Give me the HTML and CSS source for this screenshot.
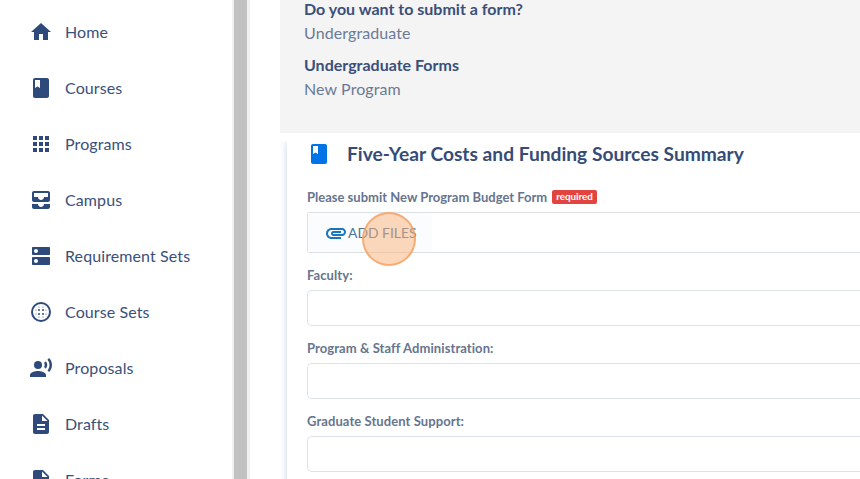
FILE: index.html
```html
<!DOCTYPE html>
<html lang="en">
<head>
    <meta charset="UTF-8">
    <meta name="viewport" content="width=device-width, initial-scale=1.0">
    <title>New Program</title>
    <link rel="stylesheet" href="styles.css">
</head>
<body>
    <div class="app">
        <nav class="sidebar">
            <ul>
                <li>
                    <svg class="icon" viewBox="0 0 24 24"><path d="M10 20v-6h4v6h5v-8h3L12 3 2 12h3v8z"/></svg>
                    <span>Home</span>
                </li>
                <li>
                    <svg class="icon" viewBox="0 0 24 24"><path d="M18 2H6c-1.1 0-2 .9-2 2v16c0 1.1.9 2 2 2h12c1.1 0 2-.9 2-2V4c0-1.1-.9-2-2-2zM6 4h5v8l-2.5-1.5L6 12V4z"/></svg>
                    <span>Courses</span>
                </li>
                <li>
                    <svg class="icon" viewBox="0 0 24 24"><path d="M4 8h4V4H4v4zm6 12h4v-4h-4v4zm-6 0h4v-4H4v4zm0-6h4v-4H4v4zm6 0h4v-4h-4v4zm6-10v4h4V4h-4zm-6 4h4V4h-4v4zm6 6h4v-4h-4v4zm0 6h4v-4h-4v4z"/></svg>
                    <span>Programs</span>
                </li>
                <li>
                    <svg class="icon" viewBox="0 0 24 24"><path d="M19 3H5c-1.1 0-2 .9-2 2v7c0 1.1.9 2 2 2h14c1.1 0 2-.9 2-2V5c0-1.1-.9-2-2-2zm0 6h-4c0 1.62-1.38 3-3 3s-3-1.38-3-3H5V5h14v4zm-4 7h6v3c0 1.1-.9 2-2 2H5c-1.1 0-2-.9-2-2v-3h6c0 1.66 1.34 3 3 3s3-1.34 3-3z"/></svg>
                    <span>Campus</span>
                </li>
                <li>
                    <svg class="icon" viewBox="0 0 24 24"><path d="M20 13H4c-.55 0-1 .45-1 1v6c0 .55.45 1 1 1h16c.55 0 1-.45 1-1v-6c0-.55-.45-1-1-1zM7 19c-1.1 0-2-.9-2-2s.9-2 2-2 2 .9 2 2-.9 2-2 2zM20 3H4c-.55 0-1 .45-1 1v6c0 .55.45 1 1 1h16c.55 0 1-.45 1-1V4c0-.55-.45-1-1-1zM7 9c-1.1 0-2-.9-2-2s.9-2 2-2 2 .9 2 2-.9 2-2 2z"/></svg>
                    <span>Requirement Sets</span>
                </li>
                <li>
                    <svg class="icon" viewBox="0 0 24 24">
                        <circle class="ring" cx="12" cy="12" r="9"/>
                        <circle cx="10" cy="10" r="1"/><circle cx="14" cy="10" r="1"/>
                        <circle cx="10" cy="14" r="1"/><circle cx="14" cy="14" r="1"/>
                        <circle cx="10" cy="7" r=".5"/><circle cx="14" cy="7" r=".5"/>
                        <circle cx="10" cy="17" r=".5"/><circle cx="14" cy="17" r=".5"/>
                        <circle cx="7" cy="10" r=".5"/><circle cx="7" cy="14" r=".5"/>
                        <circle cx="17" cy="10" r=".5"/><circle cx="17" cy="14" r=".5"/>
                    </svg>
                    <span>Course Sets</span>
                </li>
                <li>
                    <svg class="icon" viewBox="0 0 24 24"><circle cx="9" cy="9" r="4"/><path d="M9 15c-2.67 0-8 1.34-8 4v2h16v-2c0-2.66-5.33-4-8-4zm7.76-9.64l-1.68 1.69c.84 1.18.84 2.71 0 3.89l1.68 1.69c2.02-2.02 2.02-5.07 0-7.27zM20.07 2l-1.63 1.63c2.77 3.02 2.77 7.56 0 10.74L20.07 16c3.9-3.89 3.91-9.95 0-14z"/></svg>
                    <span>Proposals</span>
                </li>
                <li>
                    <svg class="icon" viewBox="0 0 24 24"><path d="M14 2H6c-1.1 0-1.99.9-1.99 2L4 20c0 1.1.89 2 1.99 2H18c1.1 0 2-.9 2-2V8l-6-6zm2 16H8v-2h8v2zm0-4H8v-2h8v2zm-3-5V3.5L18.5 9H13z"/></svg>
                    <span>Drafts</span>
                </li>
                <li>
                    <svg class="icon" viewBox="0 0 24 24"><path d="M14 2H6c-1.1 0-1.99.9-1.99 2L4 20c0 1.1.89 2 1.99 2H18c1.1 0 2-.9 2-2V8l-6-6zm2 16H8v-2h8v2zm0-4H8v-2h8v2zm-3-5V3.5L18.5 9H13z"/></svg>
                    <span>Forms</span>
                </li>
            </ul>
        </nav>
        <div class="scrollbar"><div class="thumb"></div></div>

        <main class="content">
            <dl class="summary">
                <dt>Do you want to submit a form?</dt>
                <dd>Undergraduate</dd>
                <dt>Undergraduate Forms</dt>
                <dd>New Program</dd>
            </dl>

            <div class="card-wrap">
                <section class="card">
                    <div class="card-title">
                        <svg class="icon" viewBox="0 0 24 24"><path d="M18 2H6c-1.1 0-2 .9-2 2v16c0 1.1.9 2 2 2h12c1.1 0 2-.9 2-2V4c0-1.1-.9-2-2-2zM6 4h5v8l-2.5-1.5L6 12V4z"/></svg>
                        <h2>Five-Year Costs and Funding Sources Summary</h2>
                    </div>
                    <div class="field">
                        <div class="label">Please submit New Program Budget Form <span class="required">required</span></div>
                        <div class="upload">
                            <button class="add-files">
                                <svg class="icon" viewBox="0 0 24 24"><path d="M2 12.5C2 9.46 4.46 7 7.5 7H18c2.21 0 4 1.79 4 4s-1.79 4-4 4H9.5C8.12 15 7 13.88 7 12.5S8.12 10 9.5 10H17v2H9.41c-.55 0-.55 1 0 1H18c1.1 0 2-.9 2-2s-.9-2-2-2H7.5C5.57 9 4 10.57 4 12.5S5.57 16 7.5 16H17v2H7.5C4.46 18 2 15.54 2 12.5z"/></svg>
                                <span>ADD FILES</span>
                            </button>
                            <div class="click-marker"></div>
                        </div>
                    </div>
                    <div class="field">
                        <label class="label" for="faculty">Faculty:</label>
                        <input id="faculty" type="text">
                    </div>
                    <div class="field">
                        <label class="label" for="staff">Program &amp; Staff Administration:</label>
                        <input id="staff" type="text">
                    </div>
                    <div class="field">
                        <label class="label" for="support">Graduate Student Support:</label>
                        <input id="support" type="text">
                    </div>
                </section>
            </div>
        </main>
    </div>
</body>
</html>
```
FILE: styles.css
```css
*{
    box-sizing: border-box;
    margin: 0;
    padding: 0;
}
body{
    font-family: Lato, sans-serif;
    font-size: 16px;
    color: #2e4a7b;
    background: #fff;
    overflow: hidden;
}
ul{
    list-style: none;
}
.icon{
    flex: none;
    width: 24px;
    height: 24px;
    fill: currentColor;
}
.app{
    display: flex;
    height: 479px;
    overflow: hidden;
}

/* sidebar */
.sidebar{
    flex: none;
    width: 232px;
    padding-top: 4px;
}
.sidebar li{
    display: flex;
    align-items: center;
    gap: 12px;
    height: 56px;
    padding-left: 29px;
}
.sidebar span{
    padding-bottom: 2px;
    letter-spacing: .1px;
    color: #3a5079;
}
.sidebar .ring{
    fill: none;
    stroke: currentColor;
    stroke-width: 2;
}
.scrollbar{
    flex: none;
    width: 18px;
    padding: 0 3px 0 2px;
    background: #eff1f1;
}
.scrollbar .thumb{
    height: 100%;
    background: #c1c1c1;
}

/* content */
.content{
    flex: 1;
    margin-left: 30px;
}
.summary{
    display: flow-root;
    height: 133px;
    padding-left: 24px;
    background: #f4f4f4;
    line-height: 24px;
}
.summary dt{
    margin-top: -3px;
    font-weight: bold;
    color: #3a4f79;
}
.summary dd{
    color: #6b7a96;
    margin-bottom: 11px;
    letter-spacing: .1px;
}
.card-wrap{
    margin-top: 8px;
    padding-left: 7px;
    overflow: hidden;
}
.card{
    height: 400px;
    padding-left: 20px;
    box-shadow: 0 0 8px #c9d6e8;
}
.card-title{
    display: flex;
    align-items: center;
    gap: 16px;
    height: 26px;
    color: #0073e6;
}
.card-title h2{
    font-size: 19.2px;
    line-height: 26px;
    color: #364c77;
}
.field{
    margin-bottom: 12px;
}
.label{
    display: flex;
    align-items: center;
    gap: 5px;
    height: 25px;
    padding-bottom: 6px;
    font-size: 13px;
    font-weight: bold;
    letter-spacing: .08px;
    color: #66758f;
}
.card-title + .field .label{
    height: 45px;
    padding: 15px 0 0;
    letter-spacing: 0;
}
.required{
    height: 14px;
    padding: 0 4px;
    border-radius: 2px;
    background: #e2453f;
    color: #fff;
    font-size: 9.8px;
    line-height: 13px;
}
.field input{
    display: block;
    width: 100%;
    height: 36px;
    border: 1px solid #dde2e9;
    border-right: 0;
    border-radius: 5px 0 0 5px;
}
.upload{
    position: relative;
    height: 41px;
    border: 1px solid #dcdfe3;
    border-right: 0;
    border-radius: 3px 0 0 3px;
}
.add-files{
    display: flex;
    align-items: center;
    width: 124px;
    height: 39px;
    padding-left: 16px;
    border: 0;
    background: #fafcfe;
    color: #1976c0;
    font: 13.9px Lato, sans-serif;
}
.add-files span{
    color: #4c7699;
}
/* sits over the button and the lower border */
.click-marker{
    position: absolute;
    left: 54px;
    top: -1px;
    width: 54px;
    height: 54px;
    border: 2px solid rgba(244, 157, 92, .75);
    border-radius: 50%;
    background: rgba(250, 176, 117, .5);
}
```
